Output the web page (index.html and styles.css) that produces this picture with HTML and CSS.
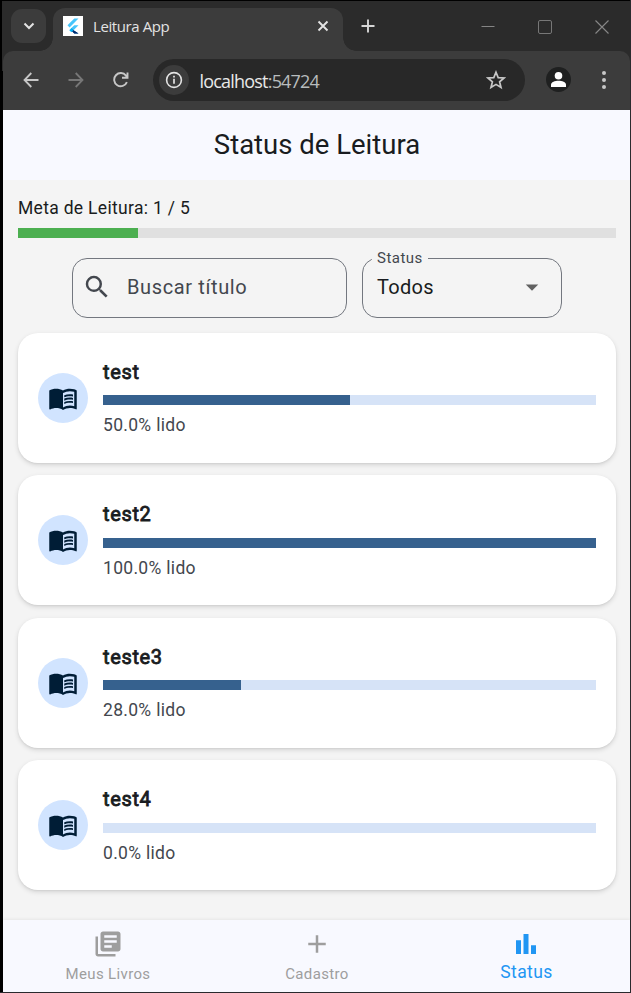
FILE: index.html
```html
<!DOCTYPE html>
<html lang="pt-BR">
<head>
<meta charset="utf-8">
<title>Leitura App</title>
<link rel="stylesheet" href="styles.css">
</head>
<body>
<svg width="0" height="0" class="defs">
  <symbol id="book" viewBox="0 0 24 24"><path d="M21 5c-1.11-.35-2.33-.5-3.5-.5-1.95 0-4.05.4-5.5 1.5-1.45-1.1-3.55-1.5-5.5-1.5S2.45 4.9 1 6v14.65c0 .25.25.5.5.5.1 0 .15-.05.25-.05C3.1 20.45 5.05 20 6.5 20c1.95 0 4.05.4 5.5 1.5 1.35-.85 3.8-1.5 5.5-1.5 1.65 0 3.35.3 4.75 1.05.1.05.15.05.25.05.25 0 .5-.25.5-.5V6c-.6-.45-1.25-.75-2-1zm0 13.5c-1.1-.35-2.3-.5-3.5-.5-1.7 0-4.15.65-5.5 1.5V8c1.35-.85 3.8-1.5 5.5-1.5 1.2 0 2.4.15 3.5.5v11.5z"/><path d="M17.5 10.5c.88 0 1.73.09 2.5.26V9.24c-.79-.15-1.64-.24-2.5-.24-1.7 0-3.24.29-4.5.83v1.66c1.13-.64 2.7-.99 4.5-.99zM13 12.49v1.66c1.13-.64 2.7-.99 4.5-.99.88 0 1.73.09 2.5.26V11.9c-.79-.15-1.64-.24-2.5-.24-1.7 0-3.24.3-4.5.83zM17.5 14.33c-1.7 0-3.24.29-4.5.83v1.66c1.13-.64 2.7-.99 4.5-.99.88 0 1.73.09 2.5.26v-1.52c-.79-.16-1.64-.24-2.5-.24z"/></symbol>
</svg>
<div class="window">
  <header class="tabstrip">
    <div class="tabsearch"><svg width="12" height="8" viewBox="0 0 12 8"><path d="M1.500 1.500 6 6l4.500-4.500" fill="none" stroke="#e3e3e3" stroke-width="2"/></svg></div>
    <div class="tab">
      <svg class="favicon" width="20" height="20" viewBox="0 0 20 20"><path fill="#fff" d="M0 0h20v20H0z"/><path fill="#47c5fb" d="M11.300 2.500h4.200L6.600 11.400 4.500 9.300z"/><path fill="#47c5fb" d="M11.300 9.200h4.200l-5 5-2.100-2.100z"/><path fill="#00569e" d="m8.400 12.100 2.100 2.100 1.900 1.200 3.100 2h-4.200l-2.900-3z"/><path fill="#00b5f8" d="m6.300 14.200 2.100-2.100 2.100 2.100-2.100 2.100z"/><path fill="#002d72" d="m10.500 14.200 5 3.200h-4.200l-2-2z"/></svg>
      <span class="tabtitle">Leitura App</span>
      <svg class="close" width="12" height="12" viewBox="0 0 12 12"><path d="m1.500 1.500 9 9m0-9-9 9" stroke="#e3e3e3" stroke-width="1.900"/></svg>
    </div>
    <svg class="newtab" width="14" height="14" viewBox="0 0 14 14"><path d="M7 .5v13M.5 7h13" stroke="#d6d6d6" stroke-width="1.900"/></svg>
    <div class="controls">
      <svg width="14" height="14" viewBox="0 0 14 14"><path d="M.5 6.500h13" stroke="#858585"/></svg>
      <svg width="14" height="14" viewBox="0 0 14 14"><rect x=".5" y=".5" width="13" height="13" rx="1.500" fill="none" stroke="#777"/></svg>
      <svg width="14" height="14" viewBox="0 0 14 14"><path d="m.5.5 13 13m0-13-13 13" stroke="#888" stroke-width="1.100"/></svg>
    </div>
  </header>
  <nav class="toolbar">
    <svg width="16" height="16" viewBox="0 0 16 16"><path d="M15.500 8H1.500M8.300 1 1.500 8l6.800 7" fill="none" stroke="#c7c7c7" stroke-width="1.800"/></svg>
    <svg width="16" height="16" viewBox="0 0 16 16"><path d="M.5 8h14M7.700 1l6.800 7-6.800 7" fill="none" stroke="#777" stroke-width="1.800"/></svg>
    <svg width="16" height="16" viewBox="0 0 16 16"><path d="M13.900 10.200A6.600 6.600 0 1 1 13 3.600L14.300 5M14.500.500v5.300H9" fill="none" stroke="#c7c7c7" stroke-width="1.900"/></svg>
    <div class="omnibox">
      <span class="info"><svg width="18" height="18" viewBox="0 0 18 18"><circle cx="9" cy="9" r="7.400" fill="none" stroke="#e3e3e3" stroke-width="1.600"/><path d="M9 7.800v5M9 4.800v1.800" stroke="#e3e3e3" stroke-width="1.700"/></svg></span>
      <span class="url">localhost<span class="port">:54724</span></span>
      <svg class="star" width="20" height="20" viewBox="0 0 20 20"><path d="m10 2.200 2.200 5.400 5.800.4-4.400 3.800 1.400 5.700-5-3.100-5 3.100 1.400-5.700L2 8l5.800-.4z" fill="none" stroke="#c7c7c7" stroke-width="1.700"/></svg>
    </div>
    <svg class="avatar" width="25" height="25" viewBox="0 0 25 25"><circle cx="12.500" cy="12.500" r="12.500" fill="#1f2020"/><circle cx="12.500" cy="8.800" r="3.800" fill="#fff"/><path fill="#fff" d="M5 20v-2.200c0-2.600 4-4 7.500-4s7.500 1.400 7.500 4V20z"/></svg>
    <svg class="dots" width="6" height="18" viewBox="0 0 6 18"><g fill="#c7c7c7"><circle cx="3" cy="2" r="2"/><circle cx="3" cy="9" r="2"/><circle cx="3" cy="16" r="2"/></g></svg>
  </nav>
  <div class="appbar"><h1>Status de Leitura</h1></div>
  <main>
    <p class="goal">Meta de Leitura: 1 / 5</p>
    <div class="goalbar"><div style="width:20%"></div></div>
    <div class="filters">
      <div class="field search">
        <svg width="30" height="30" viewBox="0 0 24 24" fill="#43474e"><path d="M15.500 14h-.79l-.28-.27A6.471 6.471 0 0 0 16 9.500 6.500 6.500 0 1 0 9.500 16c1.610 0 3.090-.59 4.230-1.570l.27.28v.79l5 4.990L20.490 19l-4.990-5zm-6 0C7.010 14 5 11.990 5 9.500S7.010 5 9.500 5 14 7.010 14 9.500 11.990 14 9.500 14z"/></svg>
        <span>Buscar título</span>
      </div>
      <div class="field select">
        <span class="floating">Status</span>
        <span class="value">Todos</span>
        <svg width="30" height="30" viewBox="0 0 24 24" fill="#616161"><path d="m7 10 5 5 5-5z"/></svg>
      </div>
    </div>
    <section class="cards">
      <article><div class="circle"><svg width="30" height="30"><use href="#book"/></svg></div><div class="body"><h2>test</h2><div class="bar"><div style="width:50%"></div></div><p>50.0% lido</p></div></article>
      <article><div class="circle"><svg width="30" height="30"><use href="#book"/></svg></div><div class="body"><h2>test2</h2><div class="bar"><div style="width:100%"></div></div><p>100.0% lido</p></div></article>
      <article><div class="circle"><svg width="30" height="30"><use href="#book"/></svg></div><div class="body"><h2>teste3</h2><div class="bar"><div style="width:28%"></div></div><p>28.0% lido</p></div></article>
      <article><div class="circle"><svg width="30" height="30"><use href="#book"/></svg></div><div class="body"><h2>test4</h2><div class="bar"><div style="width:0%"></div></div><p>0.0% lido</p></div></article>
    </section>
  </main>
  <footer class="bottomnav">
    <div><svg width="30" height="30" viewBox="0 0 24 24"><path d="M4 6H2v14c0 1.100.9 2 2 2h14v-2H4V6zm16-4H8c-1.100 0-2 .9-2 2v12c0 1.100.9 2 2 2h12c1.100 0 2-.9 2-2V4c0-1.100-.9-2-2-2zm-1 9H9V9h10v2zm-4 4H9v-2h6v2zm4-8H9V5h10v2z"/></svg><span>Meus Livros</span></div>
    <div><svg width="30" height="30" viewBox="0 0 24 24"><path d="M19 13h-6v6h-2v-6H5v-2h6V5h2v6h6v2z"/></svg><span>Cadastro</span></div>
    <div class="active"><svg width="30" height="30" viewBox="0 0 24 24"><path d="M4 9h4v11H4zm12 4h4v7h-4zm-6-9h4v16h-4z"/></svg><span>Status</span></div>
  </footer>
</div>
</body>
</html>
```
FILE: styles.css
```css
* { box-sizing: border-box; }
body { margin: 0; background: #000; font-family: Roboto, sans-serif; overflow: hidden; }
h1, h2, p { margin: 0; font-weight: 400; }
svg { display: block; flex: none; }
.defs { position: absolute; }
.window {
  width: 631px; height: 993px; padding: 1px 0 0 2px;
  border-right: 1px solid #2b2b2f; border-bottom: 1px solid #2b2b2f;
  display: flex; flex-direction: column;
  background: linear-gradient(#2b2b2b, #2b2b2b) 2px 1px / 100% 70px no-repeat, #000;
}
.tabstrip { height: 50px; flex: none; display: flex; background: #2b2b2b; }
.tabsearch {
  width: 35px; height: 34px; margin: 8px 7px 0 9px; border-radius: 11px; background: #3c3c3c;
  display: flex; align-items: center; justify-content: center;
}
.tab {
  width: 290px; height: 43px; margin-top: 7px; padding: 0 14px 7px 10px; border-radius: 12px 12px 0 0;
  background: #3c3c3c; display: flex; align-items: center; position: relative;
}
.tab::before, .tab::after { content: ""; position: absolute; bottom: 0; width: 13px; height: 13px; }
.tab::before { left: -13px; background: radial-gradient(circle at 0 0, transparent 12.500px, #3c3c3c 13px); }
.tab::after { right: -13px; background: radial-gradient(circle at 100% 0, transparent 12.500px, #3c3c3c 13px); }
.tabtitle { margin-left: 10px; font: 15px "Open Sans", sans-serif; letter-spacing: -.4px; color: #e3e3e3; white-space: nowrap; }
.close { margin-left: auto; }
.newtab { margin: 18px 0 0 18px; }
.controls { margin: 19px 21.500px 0 auto; display: flex; gap: 43px; }
.toolbar {
  height: 59px; flex: none; padding: 0 23.500px 2px 19.500px; display: flex; align-items: center;
  background: #3c3c3c; margin-left: 1px; border-radius: 10px 10px 0 0;
}
.toolbar > svg:nth-child(2), .toolbar > svg:nth-child(3) { margin-left: 29px; }
.omnibox {
  width: 372px; height: 42px; margin-left: 24px; padding: 0 19px 0 6px; border-radius: 21px;
  background: #282828; display: flex; align-items: center; position: relative; top: .5px;
}
.info { width: 30px; height: 30px; border-radius: 50%; background: #3c3c3c; display: flex; align-items: center; justify-content: center; }
.url { margin-left: 11px; padding-top: 1px; font: 18px "Open Sans", sans-serif; letter-spacing: -.8px; color: #e8e8e8; }
.port { color: #b8bcbd; }
.star { margin-left: auto; }
.avatar { margin-left: 21px; }
.dots { margin-left: auto; }
.appbar { height: 70px; flex: none; margin-left: 1px; padding: 0 0 2px 1px; background: #f8f9ff; display: flex; align-items: center; justify-content: center; }
h1 { font-size: 27.500px; line-height: 35px; color: #191c20; }
main { flex: 1; margin-left: 1px; padding: 15.500px 14px 0 15px; background: #f4f4f4; }
.goal { font-size: 17.500px; line-height: 25px; letter-spacing: .31px; color: #191c20; }
.goalbar { height: 10px; margin-top: 7px; background: #e0e0e0; }
.goalbar div { height: 100%; background: #4caf50; }
.filters { display: flex; justify-content: center; gap: 15px; margin-top: 20px; }
.field {
  height: 60px; padding-bottom: 2px; border: 1.250px solid #73777f; border-radius: 15px; display: flex; align-items: center;
  font-size: 20px; letter-spacing: .625px; color: #191c20; position: relative;
}
.search { width: 275px; padding-left: 9px; color: #43474e; }
.search span { margin-left: 15px; }
.select { width: 200px; padding: 0 14px 2px; justify-content: space-between; }
.value { letter-spacing: .3px; }
.floating {
  position: absolute; left: 9px; top: -10px; padding: 0 5px; background: #f4f4f4;
  font-size: 15px; line-height: 18px; letter-spacing: .47px; color: #43474e;
}
.cards { display: flex; flex-direction: column; gap: 12.500px; margin-top: 15px; }
article {
  height: 130px; padding: 0 20px; border-radius: 20px; background: #fff; display: flex; align-items: center; gap: 15px;
  box-shadow: 0 2px 5px rgba(0,0,0,.13), 0 1px 2px rgba(0,0,0,.06);
}
.circle { width: 50px; height: 50px; border-radius: 50%; background: #d1e4ff; display: flex; align-items: center; justify-content: center; }
.circle svg { fill: #001d36; }
.body { flex: 1; }
h2 { font-size: 20px; line-height: 30px; margin-top: -1px; padding-bottom: 1px; letter-spacing: .65px; color: #191c20; -webkit-text-stroke: .8px #191c20; }
.bar { height: 10px; margin: 7.500px 0; background: #d6e3f7; }
.bar div { height: 100%; background: #36618e; }
.body p { font-size: 17.500px; line-height: 25px; padding-top: .5px; margin-bottom: -.5px; letter-spacing: .31px; color: #43474e; }
.bottomnav {
  height: 72px; flex: none; margin-left: 1px; background: #f8f9ff; display: grid; grid-template-columns: repeat(3, 1fr);
  box-shadow: 0 -1px 3px rgba(0,0,0,.06); position: relative;
}
.bottomnav div { display: flex; flex-direction: column; align-items: center; padding-top: 9px; color: #9e9e9e; fill: #9e9e9e; }
.bottomnav span { font-size: 15px; line-height: 20px; margin-top: 5px; padding-left: 1px; letter-spacing: .35px; }
.bottomnav .active { color: #2196f3; fill: #2196f3; }
.bottomnav .active span { font-size: 17.500px; margin-top: 3px; padding-left: 2px; letter-spacing: .4px; }
```
